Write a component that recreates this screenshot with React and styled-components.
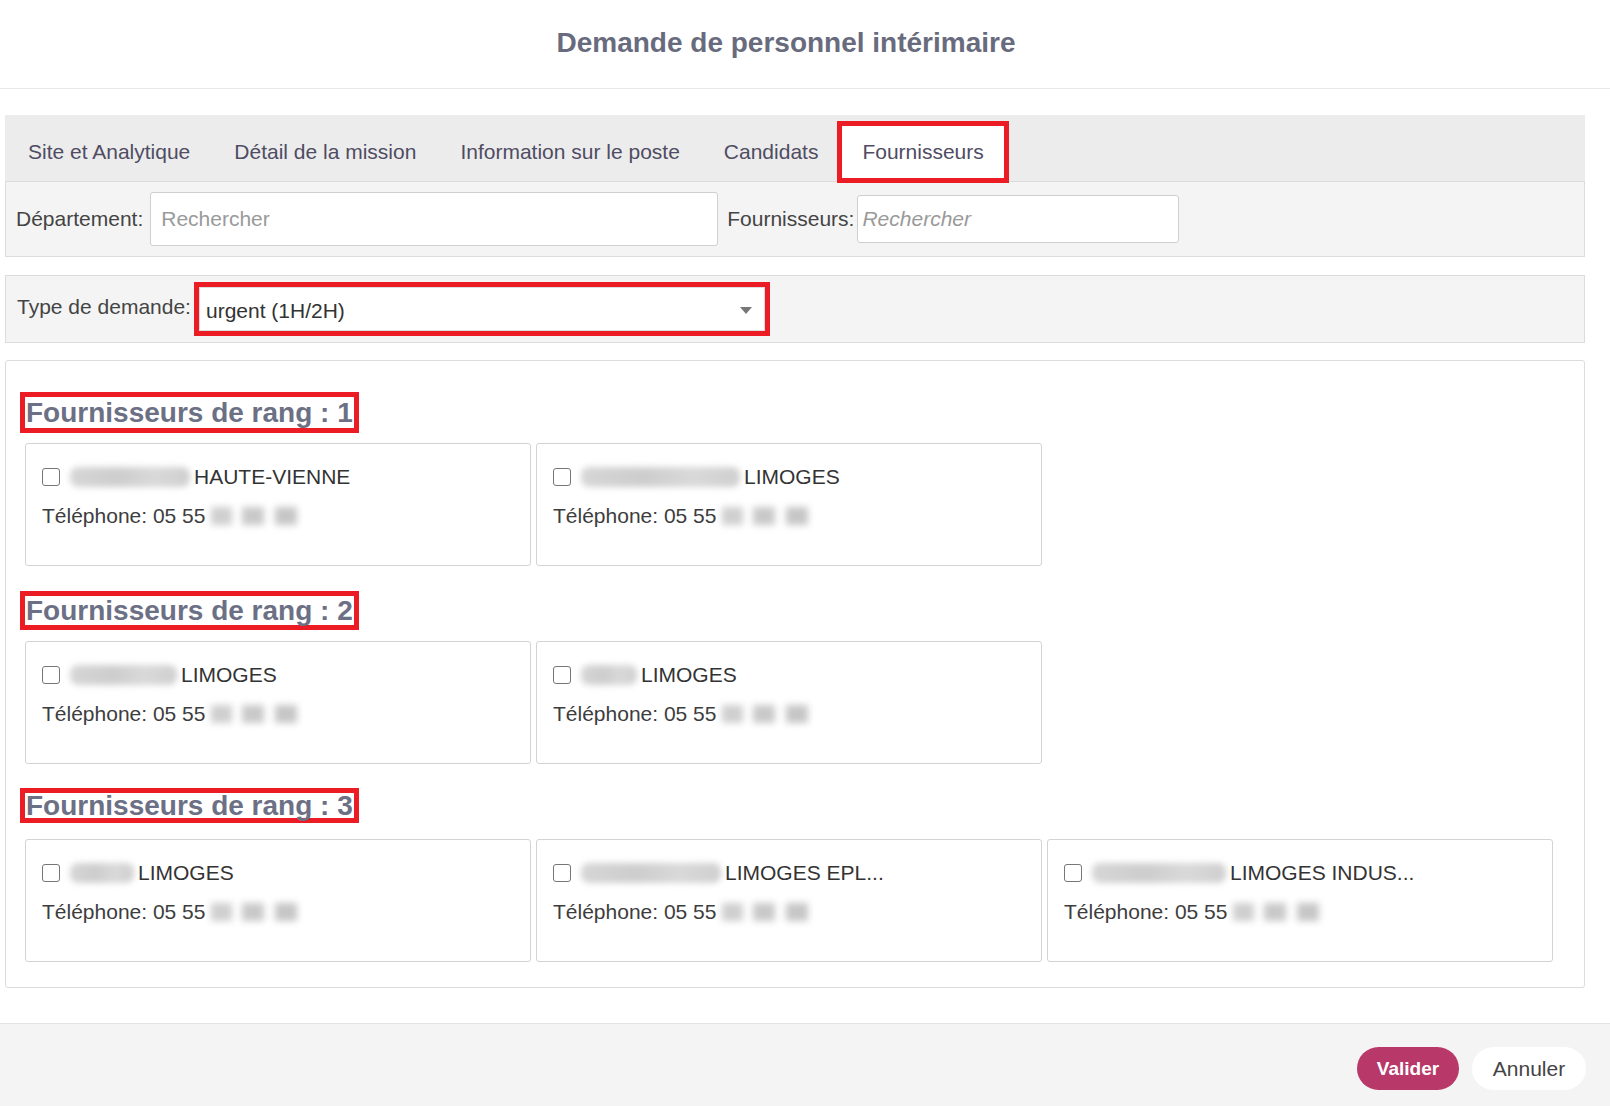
import React from "react";
import styled, { createGlobalStyle } from "styled-components";

const ranks = [
    {
        rank: 1, lh: 31, mt: 0, gap: 10,
        suppliers: [
            { blur: 120, city: "HAUTE-VIENNE" },
            { blur: 159, city: "LIMOGES" },
        ],
    },
    {
        rank: 2, lh: 29, mt: 25, gap: 11,
        suppliers: [
            { blur: 107, city: "LIMOGES" },
            { blur: 56, city: "LIMOGES" },
        ],
    },
    {
        rank: 3, lh: 25, mt: 24, gap: 16,
        suppliers: [
            { blur: 64, city: "LIMOGES" },
            { blur: 140, city: "LIMOGES EPL..." },
            { blur: 134, city: "LIMOGES INDUS..." },
        ],
    },
];

const tabs = ["Site et Analytique", "Détail de la mission", "Information sur le poste", "Candidats", "Fournisseurs"];

function App() {
    return (
        <Page>
            <GlobalStyle />
            <Header>
                <Title>Demande de personnel intérimaire</Title>
            </Header>

            <Body>
                <TabBar>
                    {tabs.map((t) => (
                        <Tab key={t} $active={t === "Fournisseurs"}>{t}</Tab>
                    ))}
                </TabBar>

                <FilterRow>
                    <Label>Département:</Label>
                    <SearchInput $w={568} $h={54} placeholder="Rechercher" />
                    <Label $ml={9}>Fournisseurs:</Label>
                    <SearchInput $w={322} $h={48} $ml={3} $italic placeholder="Rechercher" />
                </FilterRow>

                <TypeRow>
                    <Label $up>Type de demande:</Label>
                    <Select>
                        <span>urgent (1H/2H)</span>
                        <Caret />
                    </Select>
                </TypeRow>

                <Content>
                    {ranks.map((r) => (
                        <Section key={r.rank} $mt={r.mt}>
                            <RankTitle $lh={r.lh}>Fournisseurs de rang : {r.rank}</RankTitle>
                            <CardGrid $gap={r.gap}>
                                {r.suppliers.map((s, i) => (
                                    <Card key={i}>
                                        <NameRow>
                                            <Check type="checkbox" />
                                            <NameBlur $w={s.blur} />
                                            <span>{s.city}</span>
                                        </NameRow>
                                        <PhoneRow>
                                            Téléphone: 05 55
                                            <PhoneBlur />
                                        </PhoneRow>
                                    </Card>
                                ))}
                            </CardGrid>
                        </Section>
                    ))}
                </Content>
            </Body>

            <Footer>
                <Validate>Valider</Validate>
                <Cancel>Annuler</Cancel>
            </Footer>
        </Page>
    );
}

const GlobalStyle = createGlobalStyle`
    * { box-sizing: border-box; }
    body {
        margin: 0;
        background: #ffffff;
        font-family: "Liberation Sans", Arial, sans-serif;
    }
`;

const Page = styled.div`
    width: 100%;
    display: flex;
    flex-direction: column;
`;

const Header = styled.div`
    height: 89px;
    border-bottom: 1px solid #e8e8e8;
    display: flex;
    align-items: center;
    justify-content: center;
    padding: 0 38px 2px 0;
`;

const Title = styled.h1`
    margin: 0;
    font-size: 28px;
    font-weight: 700;
    color: #686b7d;
`;

const Body = styled.div`
    padding: 26px 25px 0 5px;
`;

const TabBar = styled.div`
    height: 66px;
    background: #ececec;
    display: flex;
    padding-left: 1px;
`;

const Tab = styled.div`
    display: flex;
    align-items: center;
    font-size: 21px;
    color: #4f4c63;
    padding: 8px 22px 0;
    ${(p) => p.$active && `
        position: relative;
        z-index: 1;
        background: #ffffff;
        border: 5px solid #ec1c24;
        height: 62px;
        margin: 6px 0 -2px -3px;
        padding: 0 20px;
    `}
`;

const FilterRow = styled.div`
    height: 76px;
    background: #f4f4f4;
    border: 1px solid #dcdcdc;
    display: flex;
    align-items: center;
    padding: 0 10px;
`;

const Label = styled.label`
    font-size: 21px;
    color: #444444;
    margin-left: ${(p) => p.$ml || 0}px;
    margin-bottom: ${(p) => (p.$up ? 4 : 0)}px;
    white-space: nowrap;
`;

const SearchInput = styled.input`
    width: ${(p) => p.$w}px;
    height: ${(p) => p.$h}px;
    margin-left: ${(p) => p.$ml ?? 7}px;
    border: 1px solid #cfcfcf;
    border-radius: 3px;
    background: #ffffff;
    padding: 0 10px 0 ${(p) => (p.$italic ? 4 : 10)}px;
    font-family: "Liberation Sans", Arial, sans-serif;
    font-size: 21px;
    font-style: ${(p) => (p.$italic ? "italic" : "normal")};
    color: #333333;
    outline: none;

    &::placeholder {
        color: #9a9a9a;
    }
`;

const TypeRow = styled.div`
    margin-top: 18px;
    height: 68px;
    background: #f4f4f4;
    border: 1px solid #dcdcdc;
    display: flex;
    align-items: center;
    padding: 0 11px;
    gap: 3px;
`;

const Select = styled.div`
    width: 576px;
    height: 54px;
    border: 5px solid #ec1c24;
    background: #ffffff;
    box-shadow: inset 0 0 0 1px #dddddd;
    display: flex;
    align-items: center;
    justify-content: space-between;
    padding: 3px 13px 0 7px;
    font-size: 21px;
    color: #333333;
`;

const Caret = styled.span`
    width: 0;
    height: 0;
    border-left: 6.5px solid transparent;
    border-right: 6.5px solid transparent;
    border-top: 7px solid #777777;
`;

const Content = styled.div`
    margin-top: 17px;
    border: 1px solid #dcdcdc;
    border-radius: 3px;
    background: #ffffff;
    padding: 31px 0 25px 14px;
`;

const Section = styled.div`
    margin-top: ${(p) => p.$mt}px;
`;

const RankTitle = styled.h3`
    display: inline-block;
    margin: 0;
    border: 5px solid #ec1c24;
    padding: 0 1px;
    font-size: 28px;
    font-weight: 700;
    line-height: ${(p) => p.$lh}px;
    color: #6c7085;
    white-space: nowrap;
    vertical-align: top;
`;

const CardGrid = styled.div`
    display: grid;
    grid-template-columns: repeat(3, 506px);
    column-gap: 5px;
    margin: ${(p) => p.$gap}px 0 0 5px;
`;

const Card = styled.div`
    height: 123px;
    border: 1px solid #d3d3d3;
    border-radius: 3px;
    background: #ffffff;
    padding: 22px 16px;
    font-size: 21px;
    color: #333333;
`;

const NameRow = styled.div`
    display: flex;
    align-items: center;
    height: 22px;
    white-space: nowrap;
`;

const Check = styled.input`
    appearance: none;
    margin: 0 10px 0 0;
    width: 18px;
    height: 18px;
    border: 1.5px solid #767676;
    border-radius: 3px;
    background: #ffffff;
    flex-shrink: 0;
`;

const NameBlur = styled.span`
    display: inline-block;
    width: ${(p) => p.$w}px;
    height: 20px;
    margin-right: 4px;
    border-radius: 8px;
    background: linear-gradient(to right, #d6d6d6, #cdcdcd 40%, #d9d9d9 70%, #cfcfcf);
    filter: blur(3px);
    flex-shrink: 0;
`;

const PhoneRow = styled.div`
    display: flex;
    align-items: center;
    height: 22px;
    margin-top: 17px;
    color: #3d3d3d;
    white-space: nowrap;
`;

const PhoneBlur = styled.span`
    display: inline-block;
    width: 86px;
    height: 18px;
    margin-left: 6px;
    background: linear-gradient(
        to right,
        #cfcfcf 0 24%,
        transparent 24% 36%,
        #c9c9c9 36% 62%,
        transparent 62% 74%,
        #c6c6c6 74% 100%
    );
    filter: blur(3.5px);
`;

const Footer = styled.div`
    margin-top: 35px;
    height: 83px;
    border-top: 1px solid #e3e3e3;
    background: #f4f4f4;
    display: flex;
    justify-content: flex-end;
    align-items: flex-start;
    gap: 13px;
    padding: 23px 24px 0 0;
`;

const Pill = styled.button`
    height: 43px;
    border: none;
    border-radius: 22px;
    font-family: "Liberation Sans", Arial, sans-serif;
    cursor: pointer;
`;

const Validate = styled(Pill)`
    width: 102px;
    background: #b8386a;
    color: #ffffff;
    font-size: 19px;
    font-weight: 700;
`;

const Cancel = styled(Pill)`
    width: 114px;
    background: #ffffff;
    color: #444444;
    font-size: 21px;
`;

export default App;
